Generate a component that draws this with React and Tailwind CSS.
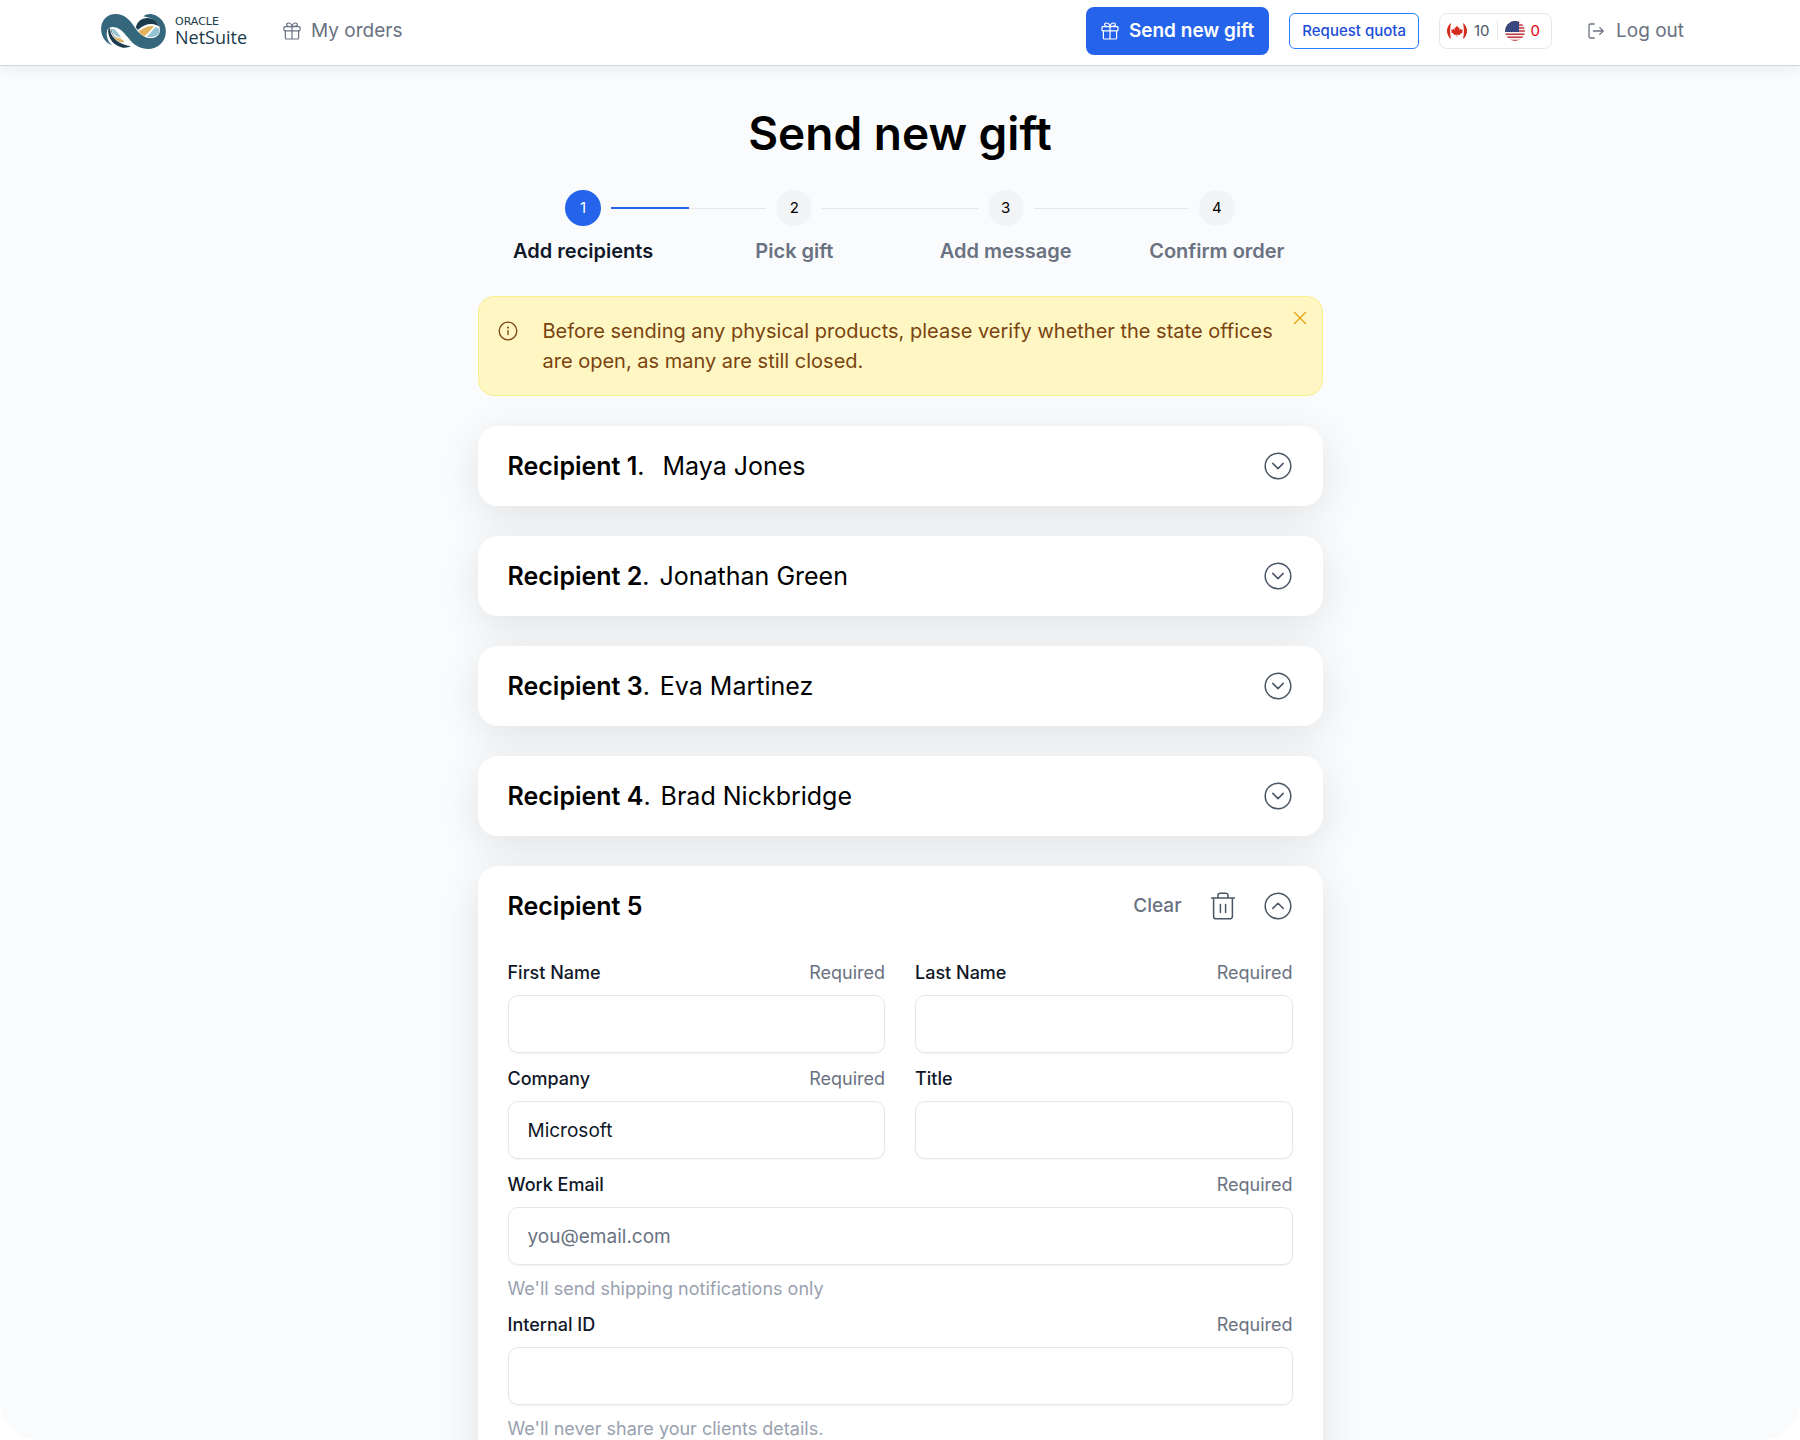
import { useId, useState } from "react";

const steps = ["Add recipients", "Pick gift", "Add message", "Confirm order"];

const recipients = [
    { id: 1, name: "Maya Jones", gap: "ml-[18px]" },
    { id: 2, name: "Jonathan Green", gap: "ml-[10px]" },
    { id: 3, name: "Eva Martinez", gap: "ml-[10px]" },
    { id: 4, name: "Brad Nickbridge", gap: "ml-[10px]" }
];

function GiftIcon() {
    return (
        <svg className="size-[18px] shrink-0" viewBox="0 0 18 18" fill="none" stroke="currentColor" strokeWidth="1.2" strokeLinejoin="round">
            <rect x="1" y="4.6" width="16" height="4.2" rx="0.8" />
            <path d="M2.4 8.8V16.2a.8.8 0 0 0 .8.8H14.8a.8.8 0 0 0 .8-.8V8.8M9 4.6V17M9 4.6C5.6 4.6 3.6 4.2 3.6 2.6C3.6 1.6 4.4 1 5.4 1C7.4 1 8.6 2.6 9 4.6C9.4 2.6 10.6 1 12.6 1C13.6 1 14.4 1.6 14.4 2.6C14.4 4.2 12.4 4.6 9 4.6" />
        </svg>
    );
}

function LogoutIcon() {
    return (
        <svg className="size-4 shrink-0" viewBox="0 0 16 16" fill="none" stroke="currentColor" strokeWidth="1.3" strokeLinecap="round" strokeLinejoin="round">
            <path d="M6.2 1H2.4A1.4 1.4 0 0 0 1 2.4v11.2A1.4 1.4 0 0 0 2.4 15h3.8M5.4 8H15M11.8 4.6L15.2 8l-3.4 3.4" />
        </svg>
    );
}

function ChevronCircle({ up }) {
    return (
        <svg className="size-7" viewBox="0 0 28 28" fill="none" stroke="currentColor" strokeWidth="1.5" strokeLinecap="round" strokeLinejoin="round">
            <circle cx="14" cy="14" r="12.8" />
            <path d={up ? "M8.8 16.4L14 11.2l5.2 5.2" : "M8.8 11.4L14 16.6l5.2-5.2"} />
        </svg>
    );
}

function TrashIcon() {
    return (
        <svg className="size-7" viewBox="0 0 28 28" fill="none" stroke="currentColor" strokeWidth="1.5" strokeLinecap="round" strokeLinejoin="round">
            <path d="M2.6 6H25.4M4.6 6V24.4A2.4 2.4 0 0 0 7 26.8H21a2.4 2.4 0 0 0 2.4-2.4V6M9 6V3.4A2.2 2.2 0 0 1 11.2 1.2h5.6A2.2 2.2 0 0 1 19 3.4V6M11.4 12.4v8M16.6 12.4v8" />
        </svg>
    );
}

function InfoIcon() {
    return (
        <svg className="size-5" viewBox="0 0 20 20" fill="none" stroke="currentColor" strokeWidth="1.3" strokeLinecap="round">
            <circle cx="10" cy="10" r="8.8" />
            <path d="M10 9.6v4" />
            <circle cx="10" cy="6.6" r="0.4" />
        </svg>
    );
}

function Logo() {
    return (
        <a href="#" className="flex items-center gap-2" aria-label="Oracle NetSuite">
            <svg className="h-[37px] w-[67px]" viewBox="60 36 200 112">
                <path fill="#35677c" d="M96 134C76 128 62 108 62 84C62 58 80 39 106 39C132 39 147 55 160 74C172 92 184 108 206 112C226 114 240 104 240 88C240 68 224 52 190 46C198 40 206 38 216 40C241 45 258 66 258 92C258 123 234 145 203 145C172 145 155 126 142 109C129 92 116 78 96 78C84 78 78 90 79 103C81 117 87 127 96 134Z" />
                <path fill="#1b3a4b" d="M167 80C171 62 184 51 202 51C220 51 233 62 238 77C218 66 198 66 174 88Z" />
                <path fill="#e2b35c" d="M175 92C190 82 204 72 222 76C212 88 204 98 192 106C184 102 179 97 175 92Z" />
                <path fill="#94c3d4" d="M227 78C234 80 239 84 238 91C237 104 222 112 200 108C208 100 216 90 227 78Z" />
                <path fill="none" stroke="#fff" strokeWidth="2.5" d="M171 90C196 68 216 66 238 78M196 107C206 100 214 84 228 77" />
                <path fill="#1b3a4b" d="M84 84C78 104 96 136 128 141C138 142 146 140 152 136C128 132 96 114 92 82Z" />
                <path fill="#94c3d4" d="M94 83C108 86 114 98 124 112C112 112 98 104 94 83Z" />
                <path fill="#e2b35c" d="M98 104C110 114 122 108 134 124C120 126 104 118 98 104Z" />
                <path fill="none" stroke="#fff" strokeWidth="2.5" d="M90 81C90 110 116 130 148 134M92 96C104 112 122 104 134 124M82 86C80 108 94 130 112 139" />
            </svg>
            <span className="flex flex-col text-[#1b3a4b]">
                <span className="font-['DejaVu_Sans'] text-[11px] leading-[11px]">ORACLE</span>
                <span className="font-['Open_Sans'] text-lg leading-5">NetSuite</span>
            </span>
        </a>
    );
}

function CanadaFlag() {
    return (
        <svg className="size-5" viewBox="0 0 20 20">
            <path fill="#d52b1e" d="M4 2A10 10 0 0 0 4 18C2.800 13 2.800 7 4 2ZM16 2A10 10 0 0 1 16 18C17.200 13 17.200 7 16 2Z" />
            <path fill="#d52b1e" d="M10 4.500L11.200 6.700L12.500 6.200L12.200 9L13.800 7.800L14.300 8.800L16 8.700L15.200 10.500L15.800 11.200L12.800 13.200L12.900 14L10.300 13.700V15.800H9.700V13.700L7.100 14L7.200 13.200L4.200 11.200L4.800 10.500L4 8.700L5.700 8.800L6.200 7.800L7.800 9L7.500 6.200L8.800 6.700Z" />
        </svg>
    );
}

function UsFlag() {
    return (
        <svg className="size-5" viewBox="0 0 20 20">
            <clipPath id="us-round">
                <circle cx="10" cy="10" r="10" />
            </clipPath>
            <g clipPath="url(#us-round)">
                <path fill="#f7f1f1" d="M0 0H20V20H0Z" />
                <path stroke="#c43a44" strokeWidth="1.5" d="M0 .8H20M0 3.900H20M0 7H20M0 10.100H20M0 13.200H20M0 16.300H20M0 19.400H20" />
                <path fill="#2f3f78" d="M0 0H14V11H0Z" />
                <path stroke="#7f8ab5" strokeWidth=".7" strokeDasharray=".7 1.500" d="M1 2H14M2 4H14M1 6H14M2 8H14M1 10H14" />
            </g>
        </svg>
    );
}

function Header() {
    return (
        <header className="relative z-10 border-b border-gray-300 bg-white shadow-[0_4px_12px_rgba(0,0,0,0.06)]">
            <div className="flex h-[65px] items-center px-[100px] pb-[3px]">
                <Logo />
                <a href="#" className="ml-9 flex items-center gap-[10px] text-[19px] text-gray-500">
                    <GiftIcon />
                    My orders
                </a>
                <div className="ml-auto flex items-center gap-5">
                    <button className="flex h-12 items-center gap-[10px] rounded-lg bg-[#2563eb] px-[15px] text-[19px] font-semibold text-white">
                        <GiftIcon />
                        Send new gift
                    </button>
                    <button className="h-9 rounded-md border border-blue-500 px-3 text-[15px] font-medium text-[#1d4ed8]">Request quota</button>
                    <div className="flex h-9 items-center rounded-lg border border-gray-200 px-[7px] text-[15px]">
                        <CanadaFlag />
                        <span className="ml-[7px] text-gray-600">10</span>
                        <span className="mx-[7px] h-5 w-px bg-gray-200" />
                        <UsFlag />
                        <span className="ml-[6px] pr-1 text-red-600">0</span>
                    </div>
                    <a href="#" className="mx-4 flex items-center gap-3 text-[19px] text-gray-500">
                        <LogoutIcon />
                        Log out
                    </a>
                </div>
            </div>
        </header>
    );
}

function Stepper({ current }) {
    return (
        <ol className="mt-[27px] grid grid-cols-4">
            {steps.map((label, i) => (
                <li key={label} className="flex flex-col items-center">
                    {/* each cell draws half of the connector on either side */}
                    <div className="flex w-full items-center gap-[10px]">
                        <span className={i === 0 ? "h-px flex-1" : "h-px flex-1 bg-gray-200"} />
                        <span
                            className={
                                i + 1 === current
                                    ? "flex size-9 items-center justify-center rounded-full bg-[#2563eb] text-[15px] text-white"
                                    : "flex size-9 items-center justify-center rounded-full bg-gray-100 text-[15px] text-black"
                            }
                        >
                            {i + 1}
                        </span>
                        <span className={i === 3 ? "h-px flex-1" : i + 1 === current ? "h-0.5 flex-1 bg-[#2563eb]" : "h-px flex-1 bg-gray-200"} />
                    </div>
                    <span className={i + 1 === current ? "mt-[9px] text-xl leading-8 font-semibold text-gray-900" : "mt-[9px] text-xl leading-8 font-semibold text-gray-500"}>
                        {label}
                    </span>
                </li>
            ))}
        </ol>
    );
}

function Notice({ onClose }) {
    return (
        <div className="relative mt-[29px] flex gap-[25px] rounded-2xl border border-[#fbee8c] bg-[#fef7c3] px-[19px] py-[19px] text-[#7a430f]">
            <span className="flex h-[30px] items-center">
                <InfoIcon />
            </span>
            <p className="pr-5 text-xl leading-[30px]">
                Before sending any physical products, please verify whether the state offices are open, as many are still closed.
            </p>
            <button className="absolute top-[13px] right-3.5 text-[#e0a512]" aria-label="Dismiss" onClick={onClose}>
                <svg className="size-4" viewBox="0 0 16 16" fill="none" stroke="currentColor" strokeWidth="1.4" strokeLinecap="round">
                    <path d="M2.500 2.500L13.500 13.500M13.500 2.500L2.500 13.500" />
                </svg>
            </button>
        </div>
    );
}

function RecipientRow({ id, name, gap }) {
    return (
        <section className="flex h-20 items-center justify-between rounded-[20px] bg-white pr-[31px] pl-[30px] shadow-[0_10px_40px_rgba(0,0,0,0.1)]">
            <h2 className="text-[25px] leading-8">
                <span className="font-semibold">Recipient {id}</span>.<span className={gap}>{name}</span>
            </h2>
            <button className="text-gray-600" aria-label={`Expand recipient ${id}`}>
                <ChevronCircle />
            </button>
        </section>
    );
}

function Field({ label, required, hint, wide, ...props }) {
    const id = useId();
    return (
        <div className={wide ? "col-span-2" : ""}>
            <div className="flex h-6 items-center justify-between text-lg">
                <label htmlFor={id} className="font-medium text-gray-900">
                    {label}
                </label>
                {required && <span className="text-gray-500">Required</span>}
            </div>
            <input
                id={id}
                className="mt-[10px] block h-[58px] w-full rounded-[10px] border border-gray-200 bg-white px-[19px] text-[19px] text-gray-900 shadow-xs outline-none placeholder:text-gray-500 focus:border-blue-500"
                {...props}
            />
            {hint && <p className="mt-[14px] text-lg leading-5 text-gray-400">{hint}</p>}
        </div>
    );
}

export default function App() {
    const [notice, setNotice] = useState(true);

    return (
        <div className="h-screen bg-white font-['Inter',sans-serif] text-black">
            <div className="h-full overflow-y-auto rounded-b-[40px] bg-[#fafbfd] [scrollbar-width:none]">
                <Header />
                <main className="mx-auto w-full max-w-[845px] pt-[37px] pb-16">
                    <h1 className="text-center text-[46px] leading-[60px] font-semibold">Send new gift</h1>
                    <Stepper current={1} />
                    {notice && <Notice onClose={() => setNotice(false)} />}
                    <div className="mt-[30px] flex flex-col gap-[30px]">
                        {recipients.map((r) => (
                            <RecipientRow key={r.id} {...r} />
                        ))}
                        <section className="rounded-[20px] bg-white px-[30px] pb-[30px] shadow-[0_10px_40px_rgba(0,0,0,0.1)]">
                            <div className="flex h-20 items-center pr-px">
                                <h2 className="text-[25px] leading-8 font-semibold">Recipient 5</h2>
                                <button className="ml-auto text-[19px] font-medium text-gray-500">Clear</button>
                                <button className="ml-[27px] text-gray-600" aria-label="Delete recipient 5">
                                    <TrashIcon />
                                </button>
                                <button className="ml-[27px] text-gray-600" aria-label="Collapse recipient 5">
                                    <ChevronCircle up />
                                </button>
                            </div>
                            <form className="mt-[15px] grid grid-cols-2 gap-x-[30px] gap-y-[14px]">
                                <Field label="First Name" required />
                                <Field label="Last Name" required />
                                <Field label="Company" required defaultValue="Microsoft" />
                                <Field label="Title" />
                                <Field label="Work Email" type="email" required wide placeholder="you@email.com" hint="We'll send shipping notifications only" />
                                <Field label="Internal ID" required wide hint="We'll never share your clients details." />
                            </form>
                        </section>
                    </div>
                </main>
            </div>
        </div>
    );
}
